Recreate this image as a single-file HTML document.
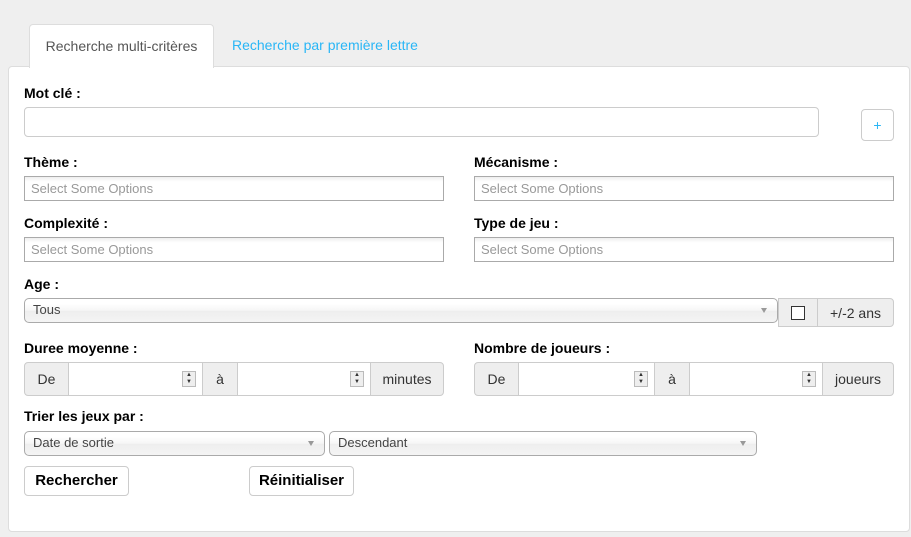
<!DOCTYPE html><html><head><meta charset="utf-8"><style>
body{margin:0;width:911px;height:537px;background:#efefef;font-family:"Liberation Sans",sans-serif;position:relative;overflow:hidden;color:#000}
.a{position:absolute;box-sizing:border-box}
.tab{left:29px;top:24px;width:185px;height:44px;background:#fff;border:1px solid #ddd;border-bottom:none;border-radius:4px 4px 0 0;font-size:14px;color:#555;text-align:center;line-height:42px;z-index:2}
.panel{left:8px;top:66px;width:902px;height:466px;background:#fff;border:1px solid #ddd;border-radius:4px}
.lbl{font-size:14px;font-weight:bold}
.inp{border:1px solid #ccc;border-radius:4px;background:#fff}
.ms{border:1px solid #aaa;background:linear-gradient(#eee 0%,#fff 20%);font-size:13px;color:#999;padding-left:6px;line-height:24px}
.sel{border:1px solid #aaa;border-radius:5px;background:linear-gradient(#fff 20%,#f6f6f6 50%,#eee 52%,#f4f4f4);font-size:13px;color:#444;padding-left:8px;line-height:22px}
.sel:after{content:"";position:absolute;right:10px;top:9px;border:3px solid transparent;border-top:5px solid #999}
.grp{border:1px solid #ccc;border-radius:4px;background:#eee;display:flex;font-size:14px;color:#333}
.grp>div{display:flex;align-items:center;justify-content:center;height:100%;box-sizing:border-box}
.grp .f{background:#fff;border-left:1px solid #ccc;border-right:1px solid #ccc;justify-content:flex-end;padding-right:6px}
.sp{width:14px;height:16px;border:1px solid #bbb;background:#eee;font-size:6px;line-height:7px;text-align:center;color:#333;box-sizing:border-box}
.btn{border:1px solid #ccc;border-radius:4px;background:#fff;font-size:15px;font-weight:bold;text-align:center;line-height:28px}
</style></head><body>
<div class="a tab">Recherche multi-critères</div>
<div class="a" style="left:232px;top:37px;font-size:14px;color:#29b6f6">Recherche par première lettre</div>
<div class="a panel"></div>
<div class="a lbl" style="left:24px;top:85px">Mot clé :</div>
<div class="a inp" style="left:24px;top:107px;width:795px;height:30px"></div>
<div class="a btn" style="left:861px;top:109px;width:33px;height:32px;font-weight:normal;color:#29b6f6;font-size:14px;line-height:30px">+</div>
<div class="a lbl" style="left:24px;top:154px">Thème :</div>
<div class="a lbl" style="left:474px;top:154px">Mécanisme :</div>
<div class="a ms" style="left:24px;top:176px;width:420px;height:25px">Select Some Options</div>
<div class="a ms" style="left:474px;top:176px;width:420px;height:25px">Select Some Options</div>
<div class="a lbl" style="left:24px;top:215px">Complexité :</div>
<div class="a lbl" style="left:474px;top:215px">Type de jeu :</div>
<div class="a ms" style="left:24px;top:237px;width:420px;height:25px">Select Some Options</div>
<div class="a ms" style="left:474px;top:237px;width:420px;height:25px">Select Some Options</div>
<div class="a lbl" style="left:24px;top:276px">Age :</div>
<div class="a sel" style="left:24px;top:298px;width:754px;height:25px">Tous</div>
<div class="a grp" style="left:778px;top:298px;width:116px;height:29px;border-radius:0 4px 4px 0">
<div style="width:39px;border-right:1px solid #ccc"><div style="width:12px;height:12px;border:1px solid #333;background:#fff"></div></div>
<div style="flex:1">+/-2 ans</div></div>
<div class="a lbl" style="left:24px;top:340px">Duree moyenne :</div>
<div class="a lbl" style="left:474px;top:340px">Nombre de joueurs :</div>
<div class="a grp" style="left:24px;top:362px;width:420px;height:34px">
<div style="width:43px">De</div><div class="f" style="width:135px;border-left:1px solid #ccc"><div class="sp">▲<br>▼</div></div>
<div style="width:34px">à</div><div class="f" style="width:134px"><div class="sp">▲<br>▼</div></div>
<div style="flex:1">minutes</div></div>
<div class="a grp" style="left:474px;top:362px;width:420px;height:34px">
<div style="width:43px">De</div><div class="f" style="width:137px"><div class="sp">▲<br>▼</div></div>
<div style="width:34px">à</div><div class="f" style="width:134px"><div class="sp">▲<br>▼</div></div>
<div style="flex:1">joueurs</div></div>
<div class="a lbl" style="left:24px;top:408px">Trier les jeux par :</div>
<div class="a sel" style="left:24px;top:431px;width:301px;height:25px">Date de sortie</div>
<div class="a sel" style="left:329px;top:431px;width:428px;height:25px">Descendant</div>
<div class="a btn" style="left:24px;top:466px;width:105px;height:30px">Rechercher</div>
<div class="a btn" style="left:249px;top:466px;width:105px;height:30px">Réinitialiser</div>
</body></html>
